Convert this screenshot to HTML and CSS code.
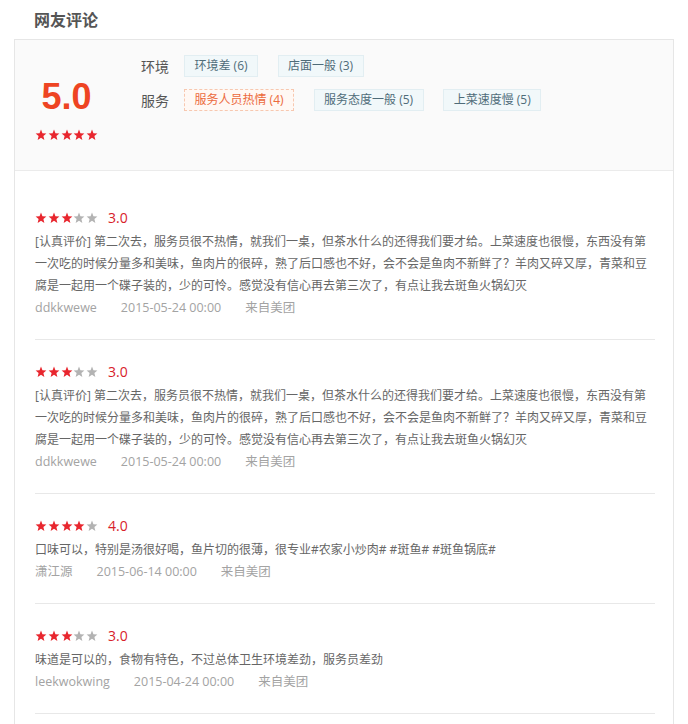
FILE: index.html
```html
<!DOCTYPE html>
<html lang="zh-CN">
<head>
<meta charset="utf-8">
<title>网友评论</title>
<link rel="stylesheet" href="styles.css">
</head>
<body>
<svg width="0" height="0" class="defs" aria-hidden="true">
  <defs>
    <symbol id="star" viewBox="0 0 24 24">
      <polygon points="12,1.2 14.9,8.4 22.8,9 16.8,14.1 18.7,21.9 12,17.7 5.3,21.9 7.2,14.1 1.2,9 9.1,8.4"/>
    </symbol>
  </defs>
</svg>
<div class="page">
  <h2 class="title">网友评论</h2>
  <div class="panel">
    <div class="summary">
      <div class="score">
        <div class="score-num">5.0</div>
        <div class="stars">
          <svg class="star on"><use href="#star"/></svg><svg class="star on"><use href="#star"/></svg><svg class="star on"><use href="#star"/></svg><svg class="star on"><use href="#star"/></svg><svg class="star on"><use href="#star"/></svg>
        </div>
      </div>
      <div class="tags">
        <div class="tag-row">
          <span class="tag-label">环境</span>
          <span class="tag">环境差 (6)</span>
          <span class="tag">店面一般 (3)</span>
        </div>
        <div class="tag-row">
          <span class="tag-label">服务</span>
          <span class="tag tag-hot">服务人员热情 (4)</span>
          <span class="tag">服务态度一般 (5)</span>
          <span class="tag">上菜速度慢 (5)</span>
        </div>
      </div>
    </div>
    <ul class="reviews">
      <li class="review">
        <div class="review-head">
          <span class="stars">
            <svg class="star on"><use href="#star"/></svg><svg class="star on"><use href="#star"/></svg><svg class="star on"><use href="#star"/></svg><svg class="star"><use href="#star"/></svg><svg class="star"><use href="#star"/></svg>
          </span>
          <span class="rating">3.0</span>
        </div>
        <p class="review-text">[认真评价] 第二次去，服务员很不热情，就我们一桌，但茶水什么的还得我们要才给。上菜速度也很慢，东西没有第一次吃的时候分量多和美味，鱼肉片的很碎，熟了后口感也不好，会不会是鱼肉不新鲜了？羊肉又碎又厚，青菜和豆腐是一起用一个碟子装的，少的可怜。感觉没有信心再去第三次了，有点让我去斑鱼火锅幻灭</p>
        <div class="meta"><span>ddkkwewe</span><span>2015-05-24 00:00</span><span>来自美团</span></div>
      </li>
      <li class="review">
        <div class="review-head">
          <span class="stars">
            <svg class="star on"><use href="#star"/></svg><svg class="star on"><use href="#star"/></svg><svg class="star on"><use href="#star"/></svg><svg class="star"><use href="#star"/></svg><svg class="star"><use href="#star"/></svg>
          </span>
          <span class="rating">3.0</span>
        </div>
        <p class="review-text">[认真评价] 第二次去，服务员很不热情，就我们一桌，但茶水什么的还得我们要才给。上菜速度也很慢，东西没有第一次吃的时候分量多和美味，鱼肉片的很碎，熟了后口感也不好，会不会是鱼肉不新鲜了？羊肉又碎又厚，青菜和豆腐是一起用一个碟子装的，少的可怜。感觉没有信心再去第三次了，有点让我去斑鱼火锅幻灭</p>
        <div class="meta"><span>ddkkwewe</span><span>2015-05-24 00:00</span><span>来自美团</span></div>
      </li>
      <li class="review">
        <div class="review-head">
          <span class="stars">
            <svg class="star on"><use href="#star"/></svg><svg class="star on"><use href="#star"/></svg><svg class="star on"><use href="#star"/></svg><svg class="star on"><use href="#star"/></svg><svg class="star"><use href="#star"/></svg>
          </span>
          <span class="rating">4.0</span>
        </div>
        <p class="review-text">口味可以，特别是汤很好喝，鱼片切的很薄，很专业#农家小炒肉# #斑鱼# #斑鱼锅底#</p>
        <div class="meta"><span>潇江源</span><span>2015-06-14 00:00</span><span>来自美团</span></div>
      </li>
      <li class="review">
        <div class="review-head">
          <span class="stars">
            <svg class="star on"><use href="#star"/></svg><svg class="star on"><use href="#star"/></svg><svg class="star on"><use href="#star"/></svg><svg class="star"><use href="#star"/></svg><svg class="star"><use href="#star"/></svg>
          </span>
          <span class="rating">3.0</span>
        </div>
        <p class="review-text">味道是可以的，食物有特色，不过总体卫生环境差劲，服务员差劲</p>
        <div class="meta"><span>leekwokwing</span><span>2015-04-24 00:00</span><span>来自美团</span></div>
      </li>
    </ul>
  </div>
</div>
</body>
</html>
```
FILE: styles.css
```css
* { box-sizing: border-box; }
html, body { margin: 0; padding: 0; background: #fff; }
body {
  font-family: "Open Sans", "Noto Sans CJK SC", sans-serif;
  font-size: 12px;
  color: #666;
}
.defs { position: absolute; width: 0; height: 0; overflow: hidden; }
.page { padding: 0 14px; width: 688px; }
.title {
  margin: 0;
  height: 39px;
  line-height: 39px;
  padding-left: 20px;
  font-size: 16px;
  font-weight: bold;
  color: #555;
  font-family: "Noto Sans CJK SC", sans-serif;
}
.panel {
  width: 660px;
  border: 1px solid #e6e6e6;
  padding-bottom: 40px;
}
.summary {
  display: flex;
  height: 131px;
  padding: 15px 0 0 20px;
  background: #fafafa;
  border-bottom: 1px solid #ebebeb;
}
.score { width: 63px; text-align: center; }
.score-num {
  margin-top: 22px;
  font-family: "Liberation Sans", Arial, sans-serif;
  font-weight: bold;
  font-size: 36px;
  line-height: 40px;
  color: #ee4422;
}
.score .stars { margin-top: 12px; }
.stars { display: flex; height: 12px; }
.star {
  width: 12px;
  height: 12px;
  margin-right: 0.75px;
  fill: #b3b3b3;
}
.star:last-child { margin-right: 0; }
.star.on { fill: #e8262e; }
.tags { margin-left: 43px; display: flex; flex-direction: column; gap: 12px; }
.tag-row { display: flex; align-items: center; height: 22px; }
.tag-label {
  font-family: "Noto Sans CJK SC", sans-serif;
  font-size: 14px;
  color: #555;
  margin-right: 15px;
}
.tag {
  height: 22px;
  line-height: 20px;
  padding: 0 9.5px;
  margin-right: 19.5px;
  border: 1px solid #e2eef2;
  background: #f1f8fa;
  color: #4f6c79;
  white-space: nowrap;
}
.tag-hot {
  border: 1px dashed #f7c8b0;
  background: #fff8f4;
  color: #ec6a3c;
}
.reviews {
  list-style: none;
  margin: 0;
  padding: 15px 0 0 20px;
}
.review {
  width: 620px;
  padding: 21px 0 20px;
  border-bottom: 1px solid #e8e8e8;
}
.review-head { display: flex; align-items: center; height: 22px; }
.rating {
  margin-left: 10px;
  font-size: 14px;
  color: #d8222a;
  line-height: 22px;
}
.review-text {
  margin: 2px 0 0;
  width: 618px;
  line-height: 22px;
  color: #666;
}
.meta { display: flex; line-height: 22px; font-size: 12.5px; color: #a3a3a3; }
.meta span { margin-right: 24px; }
```
